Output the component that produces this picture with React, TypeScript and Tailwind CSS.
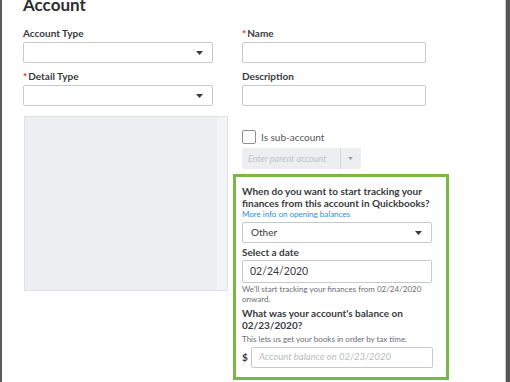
import React from "react";

const font = { fontFamily: "Lato, 'Open Sans', sans-serif" };

function Caret() {
  return (
    <svg width="7" height="4" viewBox="0 0 7 4" className="shrink-0">
      <path d="M0 0h7L3.5 4z" fill="#393a3d" />
    </svg>
  );
}

function Label({ text, req }: { text: string; req?: boolean }) {
  return (
    <div className="h-[12px] text-[10px] leading-[12px] font-bold text-[#393a3d]">
      {req && <span className="text-[#d52b1e] mr-[1px]">*</span>}
      {text}
    </div>
  );
}

function Select({ value, w, h = "h-[21px]" }: { value?: string; w: string; h?: string }) {
  return (
    <div className={`${w} ${h} border border-[#c6c9cd] rounded-[2px] bg-white flex items-center justify-between pl-[8px] pr-[9px]`}>
      <span className="text-[10px] text-[#393a3d]">{value}</span>
      <Caret />
    </div>
  );
}

function Input({ w, value, placeholder, h = "h-[21px]" }: { w: string; value?: string; placeholder?: string; h?: string }) {
  return (
    <div className={`${w} ${h} border border-[#c6c9cd] rounded-[2px] bg-white flex items-center pl-[7px]`}>
      {value && <span className="text-[10.5px] text-[#393a3d]">{value}</span>}
      {placeholder && <span className="text-[9.5px] italic text-[#b8bbc0]">{placeholder}</span>}
    </div>
  );
}

export default function App() {
  return (
    <div style={font} className="w-[510px] h-[382px] overflow-hidden flex bg-white">
      <div className="w-[2px] h-full bg-[#5a5a5a] shrink-0" />
      <div className="flex-1 pl-[21px]">
        <h1 className="text-[17px] leading-[20px] font-bold text-[#2d2e31] mt-[-5px]">Account</h1>
        <div className="flex gap-[29px] mt-[12px]">
          <div className="w-[190px] flex flex-col">
            <Label text="Account Type" />
            <div className="mt-[3px]">
              <Select w="w-[190px]" />
            </div>
            <div className="mt-[7px]">
              <Label text="Detail Type" req />
            </div>
            <div className="mt-[3px]">
              <Select w="w-[190px]" />
            </div>
            <div className="mt-[10px] ml-[1px] w-[204px] h-[175px] bg-[#eceef1] border border-[#dfe1e4] flex justify-end">
              <div className="w-[10px] h-full bg-[#f3f4f6]" />
            </div>
          </div>
          <div className="w-[184px] flex flex-col">
            <Label text="Name" req />
            <div className="mt-[3px]">
              <Input w="w-[184px]" />
            </div>
            <div className="mt-[7px]">
              <Label text="Description" />
            </div>
            <div className="mt-[3px]">
              <Input w="w-[184px]" />
            </div>
            <div className="mt-[24px] flex items-center gap-[5px] h-[14px]">
              <div className="w-[14px] h-[14px] border border-[#8d9096] rounded-[2px] bg-white" />
              <span className="text-[10px] text-[#55565b]">Is sub-account</span>
            </div>
            <div className="mt-[4px] w-[119px] h-[21px] bg-[#eceef1] rounded-[2px] flex items-center">
              <span className="pl-[6px] w-[99px] text-[9px] italic text-[#c0c3c8] border-r border-[#d4d7db] leading-[21px]">
                Enter parent account
              </span>
              <svg width="5" height="3" viewBox="0 0 7 4" className="ml-[7px]">
                <path d="M0 0h7L3.5 4z" fill="#9a9da2" />
              </svg>
            </div>
            <div className="mt-[5px] -ml-[9px] w-[216px] h-[206px] border-[3px] border-[#78b846] pl-[6px] pt-[8px] pb-[8px] flex flex-col">
              <div className="text-[10px] leading-[12px] font-bold text-[#393a3d]">
                When do you want to start tracking your
                <br />
                finances from this account in Quickbooks?
              </div>
              <div className="text-[8px] leading-[10px] text-[#2b90d6]">More info on opening balances</div>
              <div className="mt-[3px]">
                <Select w="w-[190px]" value="Other" />
              </div>
              <div className="mt-[3px]">
                <Label text="Select a date" />
              </div>
              <div className="mt-[2px]">
                <Input w="w-[190px]" h="h-[23px]" value="02/24/2020" />
              </div>
              <div className="mt-[1px] text-[8px] leading-[10px] text-[#6b6c72]">
                We'll start tracking your finances from 02/24/2020
                <br />
                onward.
              </div>
              <div className="mt-[3px] text-[10px] leading-[12px] font-bold text-[#393a3d]">
                What was your account's balance on
                <br />
                02/23/2020?
              </div>
              <div className="mt-[3px] text-[8px] leading-[10px] text-[#6b6c72]">
                This lets us get your books in order by tax time.
              </div>
              <div className="mt-[3px] flex items-center gap-[4px]">
                <span className="text-[10px] font-bold text-[#393a3d] w-[5px]">$</span>
                <Input w="w-[182px]" placeholder="Account balance on 02/23/2020" />
              </div>
            </div>
          </div>
        </div>
      </div>
      <div className="w-[1px] h-full bg-[#c9c9c9] shrink-0" />
      <div className="w-[4px] h-full bg-[#555555] shrink-0" />
    </div>
  );
}
